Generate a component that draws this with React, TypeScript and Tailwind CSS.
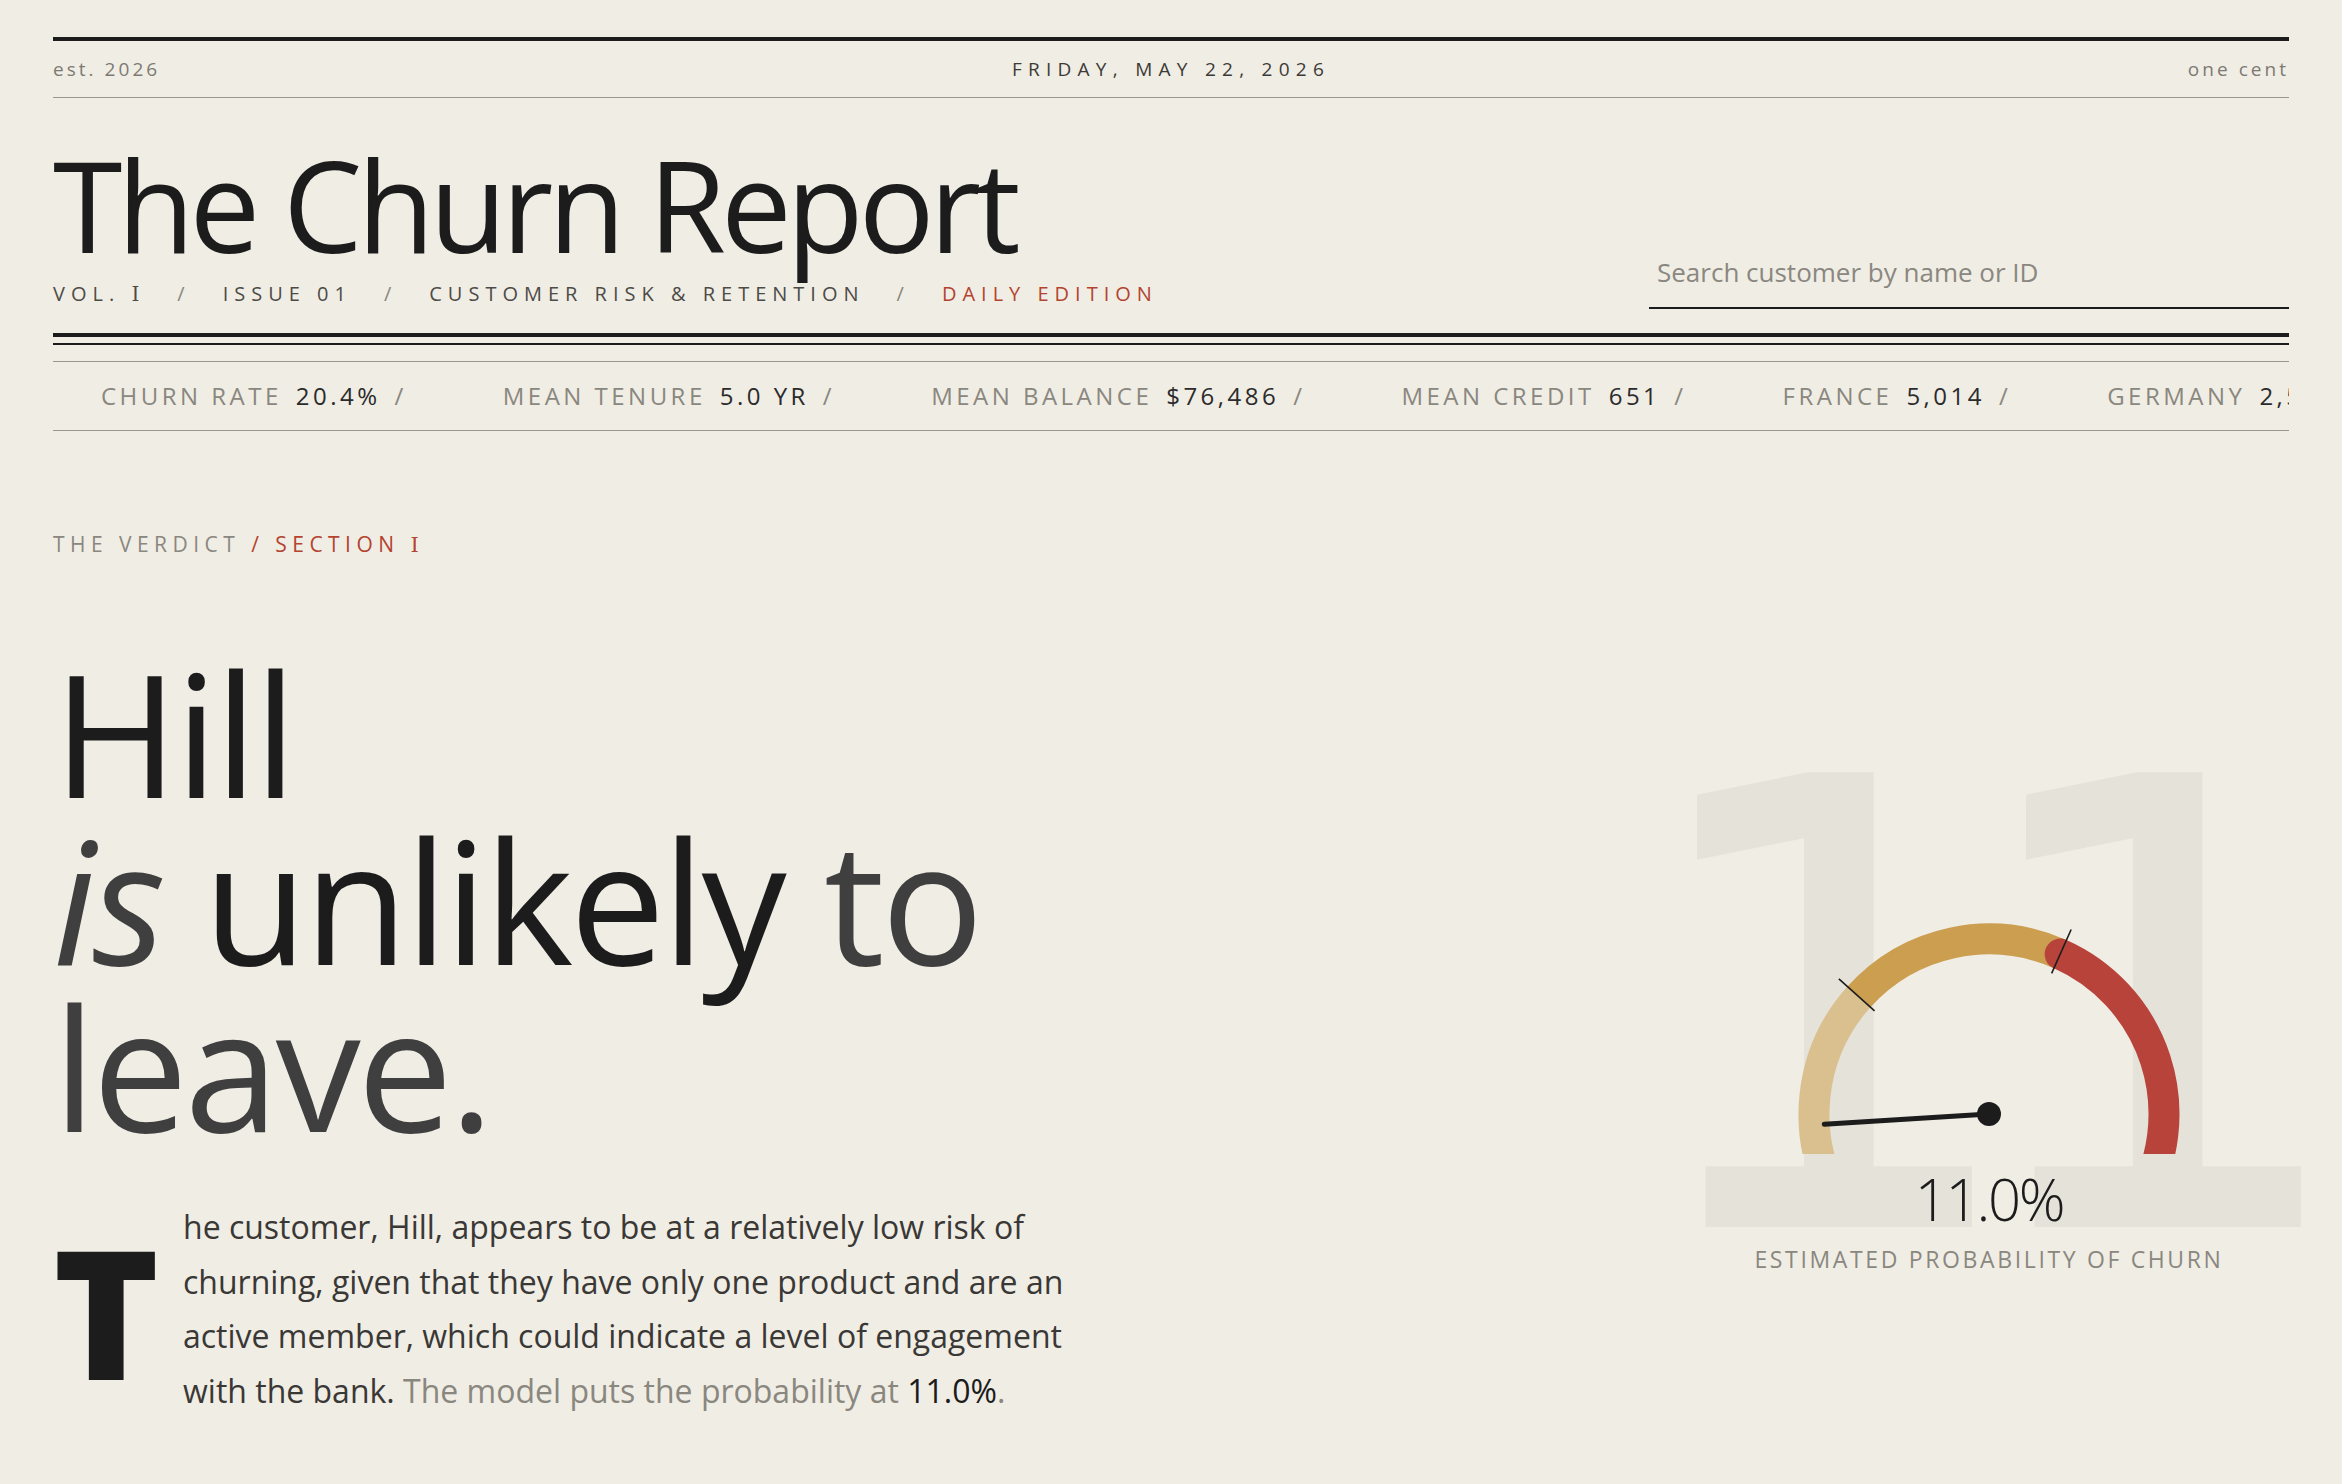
import React from 'react';

// ─── Data ────────────────────────────────────────────────────────────────────
const TICKER = [
  { label: 'Churn rate', value: '20.4%' },
  { label: 'Mean tenure', value: '5.0 yr' },
  { label: 'Mean balance', value: '$76,486' },
  { label: 'Mean credit', value: '651' },
  { label: 'France', value: '5,014' },
  { label: 'Germany', value: '2,509' },
  { label: 'Spain', value: '2,477' },
];

const PROBABILITY = 0.11;

function Numeral() {
  return <span className="font-['DejaVu_Serif',serif] font-normal">Ⅰ</span>;
}

// ─── Gauge ───────────────────────────────────────────────────────────────────
// 240° sweep: value 0 sits at 210°, value 1 at -30°. Bottom is clipped by the svg box.
function Gauge({ p }: { p: number }) {
  const cx = 210;
  const cy = 213;
  const r = 175;
  const ang = (v: number) => 210 - 240 * v;
  const pt = (a: number, rr: number) => {
    const rad = (a * Math.PI) / 180;
    return [cx + rr * Math.cos(rad), cy - rr * Math.sin(rad)];
  };
  const arc = (a0: number, a1: number) => {
    const [x0, y0] = pt(a0, r);
    const [x1, y1] = pt(a1, r);
    const large = a0 - a1 > 180 ? 1 : 0;
    return `M ${x0} ${y0} A ${r} ${r} 0 ${large} 1 ${x1} ${y1}`;
  };
  const tick = (v: number) => {
    const [x0, y0] = pt(ang(v), 154);
    const [x1, y1] = pt(ang(v), 202);
    return <line x1={x0} y1={y0} x2={x1} y2={y1} stroke="#1c1c1c" strokeWidth="1.6" />;
  };
  const [nx, ny] = pt(ang(p), 165);

  return (
    <svg width="420" height="253" viewBox="0 0 420 253" className="relative z-10 block">
      <path d={arc(ang(0), ang(0.3))} fill="none" stroke="#d9c08e" strokeWidth="31" />
      <path d={arc(ang(0.3), ang(0.6))} fill="none" stroke="#cc9e50" strokeWidth="31" />
      <path d={arc(ang(0.6), ang(1))} fill="none" stroke="#b8433a" strokeWidth="31" strokeLinecap="round" />
      {tick(0.3)}
      {tick(0.6)}
      <line x1={cx} y1={cy} x2={nx} y2={ny} stroke="#1c1c1c" strokeWidth="5" strokeLinecap="round" />
      <circle cx={cx} cy={cy} r="12" fill="#1c1c1c" />
    </svg>
  );
}

// ─── Page ────────────────────────────────────────────────────────────────────
export default function App() {
  return (
    <div className="min-h-screen overflow-x-hidden bg-[#f0ede5] font-['Open_Sans',sans-serif] text-[#1c1c1c]">
      <div className="px-[53px] pt-[37px] pb-[40px]">
        {/* Top strip */}
        <div className="h-[4px] bg-[#1c1c1c]" />
        <div className="grid h-[56px] grid-cols-3 items-center text-[19px] leading-none">
          <span className="tracking-[0.16em] text-[#7d7a73]">est. 2026</span>
          <span className="text-center tracking-[0.33em] text-[#3c3a36]">FRIDAY, MAY 22, 2026</span>
          <span className="text-right tracking-[0.16em] text-[#7d7a73]">one cent</span>
        </div>
        <div className="h-px bg-[#9a978f]" />

        {/* Masthead */}
        <div className="flex items-end justify-between">
          <div className="pt-[43px] pb-[5px]">
            <h1 className="text-[126px] leading-none font-normal tracking-[-0.04em]">The Churn Report</h1>
            <div className="mt-[17px] flex gap-[32px] text-[20px] leading-none tracking-[0.3em] text-[#4d4b46]">
              <span>VOL. <Numeral /></span>
              <span className="text-[#8a877f]">/</span>
              <span>ISSUE 01</span>
              <span className="text-[#8a877f]">/</span>
              <span>CUSTOMER RISK &amp; RETENTION</span>
              <span className="text-[#8a877f]">/</span>
              <span className="text-[#b4432e]">DAILY EDITION</span>
            </div>
          </div>
          <input
            type="text"
            placeholder="Search customer by name or ID"
            className="w-[640px] border-b-2 border-[#1c1c1c] bg-transparent px-2 pt-0 pb-[15px] text-[26px] leading-[39px] text-[#1c1c1c] outline-none placeholder:text-[#8a8780]"
          />
        </div>

        {/* Double rule + ticker */}
        <div className="mt-[24px] h-[4px] bg-[#1c1c1c]" />
        <div className="mt-[6px] h-[2px] bg-[#1c1c1c]" />
        <div className="mt-[16px] h-px bg-[#9a978f]" />
        <div className="flex h-[68px] items-center overflow-hidden whitespace-nowrap text-[24px] leading-none tracking-[0.145em] uppercase">
          {TICKER.map(t => (
            <div key={t.label} className="flex shrink-0 items-baseline gap-[14px] px-12">
              <span className="text-[#8a877f]">{t.label}</span>
              <span className="text-[#2b2b2b]">{t.value}</span>
              <span className="text-[#8a877f]">/</span>
            </div>
          ))}
        </div>
        <div className="h-px bg-[#9a978f]" />

        {/* The verdict */}
        <p className="mt-[103px] text-[21px] leading-none tracking-[0.26em] text-[#8a877f]">
          THE VERDICT <span className="text-[#b4432e]">/ SECTION <Numeral /></span>
        </p>

        <div className="mt-[93px] flex justify-between">
          <div className="w-[1050px]">
            <h2 className="text-[170px] leading-[167px] font-normal tracking-[-0.02em]">
              Hill
              <br />
              <em className="text-[#3f3f3f]">is</em> unlikely <span className="text-[#3f3f3f]">to leave.</span>
            </h2>

            <div className="mt-[50px] flex">
              <div className="w-[130px] shrink-0 pt-[21px]">
                <div className="text-[180px] leading-none font-extrabold text-[#1c1c1c]">T</div>
              </div>
              <p className="w-[920px] text-[32px] leading-[54.6px] text-[#3a3835]">
                he customer, Hill, appears to be at a relatively low risk of churning, given that they have only one
                product and are an active member, which could indicate a level of engagement with the bank.{' '}
                <span className="text-[#8a877f]">The model puts the probability at</span>{' '}
                <span className="text-[#1c1c1c]">11.0%</span>
                <span className="text-[#8a877f]">.</span>
              </p>
            </div>
          </div>

          {/* Gauge */}
          <div className="w-[600px] shrink-0 pt-[252px]">
            <div className="relative flex flex-col items-center">
              <span className="pointer-events-none absolute top-[-195px] left-[-54px] z-0 font-['DejaVu_Sans',sans-serif] text-[610px] leading-none tracking-[-0.097em] whitespace-nowrap text-[#e5e2da] select-none [-webkit-text-stroke:10px_#e5e2da]">
                11
              </span>
              <Gauge p={PROBABILITY} />
              <div className="relative z-10 mt-[16px] text-[58px] leading-none font-light tracking-[-0.04em] text-[#1c1c1c]">
                11.0%
              </div>
              <div className="relative z-10 mt-[20px] text-[23px] leading-none tracking-[0.115em] text-[#8a877f]">
                ESTIMATED PROBABILITY OF CHURN
              </div>
            </div>
          </div>
        </div>
      </div>
    </div>
  );
}
